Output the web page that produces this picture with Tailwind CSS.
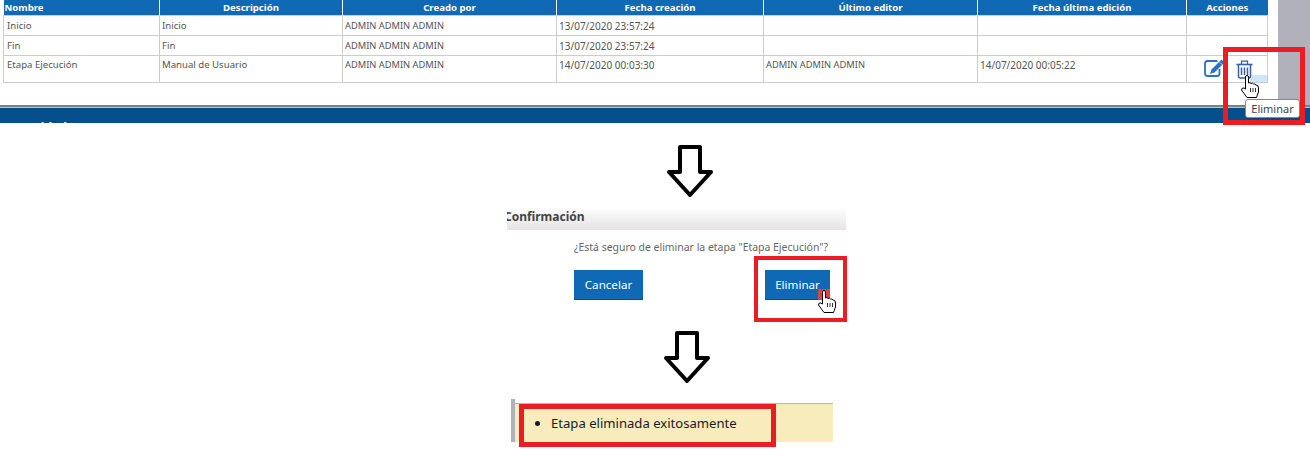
<!DOCTYPE html>
<html lang="es"><head><meta charset="utf-8"><script src="https://cdn.jsdelivr.net/npm/@tailwindcss/browser@4"></script></head>
<body class="bg-white font-['Noto_Sans',sans-serif]">
<div class="relative w-[1310px] h-[451px] overflow-hidden bg-white">

<section class="h-[123px] flex flex-col">
  <div class="flex h-[105px]">
    <div class="w-[1278px] pl-[3px] bg-white">
      <table class="table-fixed border-collapse w-[1264px] text-[9.6px] leading-[14px] text-[#555]">
        <colgroup><col class="w-[156px]"><col class="w-[183px]"><col class="w-[214px]"><col class="w-[207px]"><col class="w-[214px]"><col class="w-[209px]"><col class="w-[81px]"></colgroup>
        <thead>
          <tr class="h-[15px] bg-[#0f69b4] text-white font-bold">
            <th class="text-left pl-[1px] pt-[1px] border-r border-white">Nombre</th>
            <th class="pt-[1px] border-r border-white">Descripción</th>
            <th class="pt-[1px] border-r border-white">Creado por</th>
            <th class="pt-[1px] border-r border-white">Fecha creación</th>
            <th class="pt-[1px] border-r border-white">Último editor</th>
            <th class="pt-[1px] border-r border-white">Fecha última edición</th>
            <th class="pt-[1px]">Acciones</th>
          </tr>
        </thead>
        <tbody>
          <tr class="h-[20px]">
            <td class="border border-[#cccccc] pl-[3px] pt-[1px]">Inicio</td><td class="border border-[#cccccc] pl-[2px] pt-[1px]">Inicio</td><td class="border border-[#cccccc] pl-[2px] pt-[1px] text-[9.3px]">ADMIN ADMIN ADMIN</td><td class="border border-[#cccccc] pl-[2px] pt-[1px] text-[10px]">13/07/2020 23:57:24</td><td class="border border-[#cccccc]"></td><td class="border border-[#cccccc]"></td><td class="border border-[#cccccc]"></td>
          </tr>
          <tr class="h-[20px]">
            <td class="border border-[#cccccc] pl-[3px] pt-[1px]">Fin</td><td class="border border-[#cccccc] pl-[2px] pt-[1px]">Fin</td><td class="border border-[#cccccc] pl-[2px] pt-[1px] text-[9.3px]">ADMIN ADMIN ADMIN</td><td class="border border-[#cccccc] pl-[2px] pt-[1px] text-[10px]">13/07/2020 23:57:24</td><td class="border border-[#cccccc]"></td><td class="border border-[#cccccc]"></td><td class="border border-[#cccccc]"></td>
          </tr>
          <tr class="h-[27px] align-top">
            <td class="border border-[#cccccc] pl-[3px] pt-[2px]">Etapa Ejecución</td><td class="border border-[#cccccc] pl-[2px] pt-[2px]">Manual de Usuario</td><td class="border border-[#cccccc] pl-[2px] pt-[2px] text-[9.3px]">ADMIN ADMIN ADMIN</td><td class="border border-[#cccccc] pl-[2px] pt-[2px] text-[10px]">14/07/2020 00:03:30</td><td class="border border-[#cccccc] pl-[2px] pt-[2px] text-[9.3px]">ADMIN ADMIN ADMIN</td><td class="border border-[#cccccc] pl-[2px] pt-[2px] text-[10px]">14/07/2020 00:05:22</td>
            <td class="border border-[#cccccc] p-0 relative">
              <span class="absolute right-0 bottom-0 w-[17px] h-[7px] bg-[#cfe4f8]"></span>
              <svg class="absolute left-[17px] top-[3px]" width="21" height="18" viewBox="0 0 21 18" fill="none">
                <path d="M13.5 2H3.5Q1 2 1 4.5V14.5Q1 17 3.5 17H13Q15.5 17 15.5 14.5V10" stroke="#2a70c4" stroke-width="1.8"/>
                <path d="M17.5 0.5L20.5 3.5L10.5 13.5L6 15L7.5 10.5Z" fill="#2a70c4"/>
                <path d="M16 3.5L18 5.5" stroke="#fff" stroke-width=".8"/>
              </svg>
              <svg class="absolute left-[49px] top-[4px]" width="17" height="19" viewBox="0 0 17 19" fill="none" stroke="#3560ab">
                <path d="M.5 4.5H16.5" stroke-width="1.6"/>
                <path d="M5.5 4V1.2H11.5V4" stroke-width="1.3"/>
                <path d="M2.5 5V16Q2.5 18 4.5 18H12.5Q14.5 18 14.5 16V5" stroke-width="1.5"/>
                <path d="M5.5 7.5V15M8.5 7.5V15M11.5 7.5V15" stroke-width="1.5"/>
              </svg>
            </td>
          </tr>
        </tbody>
      </table>
    </div>
    <div class="flex-1 bg-[#b1b1bc]"></div>
  </div>
  <div class="h-[2px] bg-[#808080]"></div>
  <div class="h-[16px] bg-[#05508c] border-t border-[#b8c4cf] overflow-hidden pl-[24px] text-white font-bold text-[12px] leading-[16px] pt-[12px]">Unidades</div>
</section>

<div class="ml-[665px] mt-[21px] h-[55px]">
  <svg class="block" width="50" height="56" viewBox="0 0 50 56" fill="#fff" stroke="#000" stroke-width="4" stroke-linejoin="round"><path d="M15 3H35V28H46L25 51L4 28H15Z"/></svg>
</div>

<section class="mt-[8px] ml-[507px] w-[339px]">
  <h2 class="h-[23px] -indent-[3px] overflow-hidden text-[12px] leading-[19px] font-bold text-[#444] bg-gradient-to-b from-white to-[#e5e3e3]">Confirmación</h2>
  <p class="ml-[67px] mt-[9px] text-[10.45px] leading-[16px] text-[#666] whitespace-nowrap">¿Está seguro de eliminar la etapa "Etapa Ejecución"?</p>
  <div class="ml-[67px] mt-[15px] flex gap-[122px]">
    <button class="w-[69px] h-[30px] bg-[#0f69b4] border-b border-[#0a4f8a] text-white text-[11.6px]">Cancelar</button>
    <button class="w-[65px] h-[30px] bg-[#0f69b4] border-b border-[#0a4f8a] text-white text-[11.6px]">Eliminar</button>
  </div>
</section>

<div class="ml-[662px] mt-[30px] h-[55px]">
  <svg class="block" width="50" height="56" viewBox="0 0 50 56" fill="#fff" stroke="#000" stroke-width="4" stroke-linejoin="round"><path d="M15 3H35V28H46L25 51L4 28H15Z"/></svg>
</div>

<section class="mt-[14px] ml-[511px] w-[322px] h-[43px] flex">
  <div class="w-[4px] bg-[#b1b1bc]"></div>
  <div class="flex-1 mt-[4px] bg-[#f9ecbc] border-t border-[#d9b56a]">
    <ul class="list-disc pl-[36px] text-[13.1px] leading-[39px] text-[#1a1a2a]"><li>Etapa eliminada exitosamente</li></ul>
  </div>
</section>

<!-- annotations -->
<div class="absolute left-[1223px] top-[47px] w-[82px] h-[78px] border-[5px] border-[#ed1c24]"></div>
<div class="absolute left-[1245px] top-[99px] w-[55px] h-[19px] bg-white border border-[#888] rounded-[3px] shadow-sm text-[11px] leading-[17px] text-center text-[#444]">Eliminar</div>
<svg class="absolute left-[1241px] top-[75px]" width="18" height="23" viewBox="0 0 18 23" fill="#fff" stroke="#000" stroke-width="1"><path d="M4.5 14V2Q4.5 .5 6 .5T7.5 2V8Q9 7 10 8.5Q11.5 7.5 12.5 9Q14 8.5 15 10Q17.5 10 17.5 13V17L15.5 22.5H6L.5 15Q.5 12.5 3 13Z"/><path d="M9.5 13v4M12 13v4M14.5 13v4" stroke-width=".8"/></svg>

<div class="absolute left-[754px] top-[256px] w-[93px] h-[66px] border-[4px] border-[#ed1c24]"></div>
<div class="absolute left-[818px] top-[289px] w-[12px] h-[11px] bg-[#e0404a]"></div>
<svg class="absolute left-[818px] top-[290px]" width="18" height="23" viewBox="0 0 18 23" fill="#fff" stroke="#000" stroke-width="1"><path d="M4.5 14V2Q4.5 .5 6 .5T7.5 2V8Q9 7 10 8.5Q11.5 7.5 12.5 9Q14 8.5 15 10Q17.5 10 17.5 13V17L15.5 22.5H6L.5 15Q.5 12.5 3 13Z"/><path d="M9.5 13v4M12 13v4M14.5 13v4" stroke-width=".8"/></svg>

<div class="absolute left-[519px] top-[404px] w-[257px] h-[43px] border-[5px] border-[#ed1c24]"></div>
</div>
</body></html>
